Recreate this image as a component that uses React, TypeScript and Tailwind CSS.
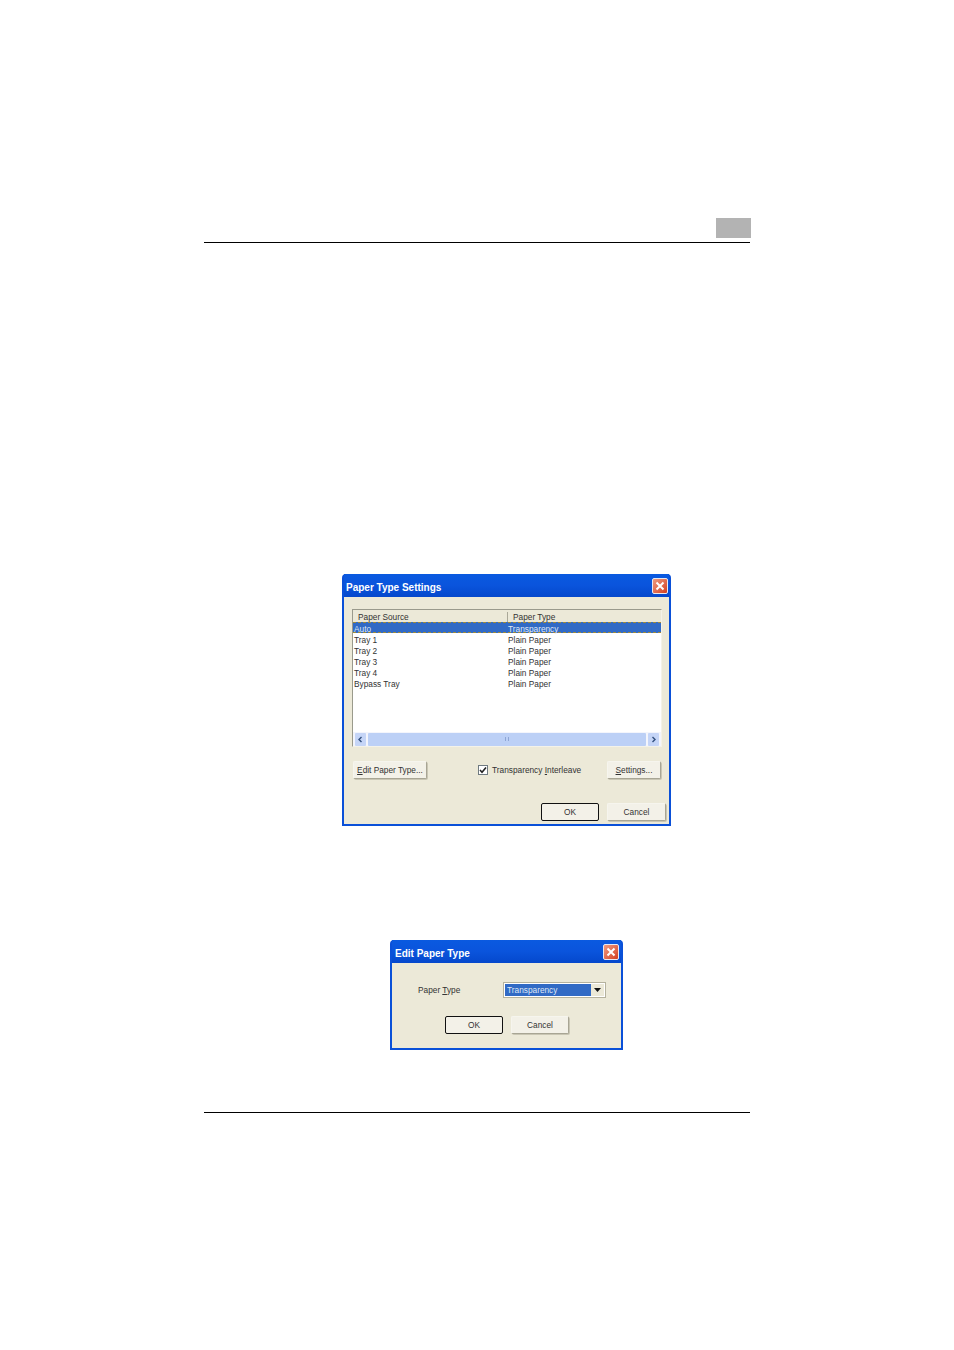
import { ReactNode } from "react";

const font = "font-['Liberation_Sans',Arial,sans-serif]";

const rows = [
  ["Tray 1", "Plain Paper"],
  ["Tray 2", "Plain Paper"],
  ["Tray 3", "Plain Paper"],
  ["Tray 4", "Plain Paper"],
  ["Bypass Tray", "Plain Paper"],
];

function CloseButton() {
  return (
    <div className="mt-[1px] flex h-[16px] w-[16px] items-center justify-center rounded-[2px] border border-[#e8e8f0] bg-gradient-to-br from-[#ee9a80] to-[#d33c1c]">
      <svg width="10" height="10" viewBox="0 0 10 10">
        <path d="M1.5 1.5 L8.5 8.5 M8.5 1.5 L1.5 8.5" stroke="#fff" strokeWidth="2" />
      </svg>
    </div>
  );
}

function TitleBar({ title, className }: { title: string; className: string }) {
  return (
    <div
      className={`flex h-[23px] items-center justify-between bg-gradient-to-b from-[#0a5ae0] via-[#0a54dc] to-[#0548cc] ${className}`}
    >
      <span className="pt-[3px] text-[10px] font-bold text-white">{title}</span>
      <CloseButton />
    </div>
  );
}

function Btn({
  children,
  className,
  primary,
}: {
  children: ReactNode;
  className: string;
  primary?: boolean;
}) {
  return (
    <div
      className={`flex h-[18px] items-center justify-center rounded-[2px] border bg-[#f3f1e8] text-[8.3px] text-[#333] ${
        primary
          ? "border-[#111]"
          : "border-[#f6f5ee] border-r-[#a8a594] border-b-[#a8a594] shadow-[1px_1px_0_#c9c6b4]"
      } ${className}`}
    >
      {children}
    </div>
  );
}

function ArrowBtn({ d }: { d: string }) {
  return (
    <div className="flex h-[13px] w-[11px] items-center justify-center rounded-[1px] bg-[#c5d5f7]">
      <svg width="7" height="7" viewBox="0 0 7 7">
        <path d={d} stroke="#33507f" strokeWidth="1.4" fill="none" />
      </svg>
    </div>
  );
}

function SettingsDialog() {
  return (
    <div className="ml-[138px] mt-[331px] h-[252px] w-[329px] rounded-t-[4px] border-2 border-t-0 border-[#0a50d8] bg-[#ece9d8]">
      <TitleBar title="Paper Type Settings" className="pl-[2px] pr-[1px]" />
      <div className="px-[8px] pt-[12px]">
        <div className="flex h-[138px] w-[310px] flex-col border border-[#9a9a8c] border-r-[#f4f2e8] border-b-[#f4f2e8] bg-white">
          <div className="flex h-[12px] shrink-0 items-end bg-[#ece9d8] text-[8.3px] leading-[10px] text-[#333]">
            <div className="w-[155px] border-r border-[#aaa898] pl-[5px]">Paper Source</div>
            <div className="pl-[5px]">Paper Type</div>
          </div>
          <div className="flex h-[11px] shrink-0 items-center border-y border-dashed border-[#a08a3a] bg-[#316ac5] pt-[4px] text-[8.3px] text-[#dfe6f5]">
            <div className="w-[155px] pl-px">Auto</div>
            <div>Transparency</div>
          </div>
          <div className="flex-1">
            {rows.map(([source, type]) => (
              <div key={source} className="flex h-[11px] items-center pt-[4px] text-[8.3px] text-[#333]">
                <div className="w-[155px] pl-px">{source}</div>
                <div>{type}</div>
              </div>
            ))}
          </div>
          <div className="flex h-[14px] shrink-0 items-center justify-between bg-[#f3f5fc] px-[2px]">
            <ArrowBtn d="M4.5 1 L2 3.5 L4.5 6" />
            <div className="mx-[2px] flex h-[13px] flex-1 items-center justify-center rounded-[1px] bg-[#bcd0f6]">
              <span className="h-[4px] w-[4px] border-x border-[#8ea6d6]" />
            </div>
            <ArrowBtn d="M2.5 1 L5 3.5 L2.5 6" />
          </div>
        </div>
        <div className="mt-[14px] flex w-[309px] items-center pl-px">
          <Btn className="w-[74px]">
            <span>
              <u>E</u>dit Paper Type...
            </span>
          </Btn>
          <div className="mb-[1px] ml-[51px] flex h-[10px] w-[10px] items-center justify-center border border-[#6f7a80] bg-white">
            <svg width="8" height="8" viewBox="0 0 8 8">
              <path d="M1 4 L3 6.2 L7 1.5" stroke="#222" strokeWidth="1.6" fill="none" />
            </svg>
          </div>
          <span className="ml-[4px] text-[8.3px] text-[#333]">
            Transparency <u>I</u>nterleave
          </span>
          <Btn className="ml-auto w-[54px]">
            <span>
              <u>S</u>ettings...
            </span>
          </Btn>
        </div>
        <div className="mr-[-5px] mt-[24px] flex justify-end gap-[8px]">
          <Btn primary className="w-[58px]">
            OK
          </Btn>
          <Btn className="w-[59px]">Cancel</Btn>
        </div>
      </div>
    </div>
  );
}

function EditDialog() {
  return (
    <div className="ml-[186px] mt-[114px] h-[110px] w-[233px] rounded-t-[4px] border-2 border-t-0 border-[#0a50d8] bg-[#ece9d8]">
      <TitleBar title="Edit Paper Type" className="pl-[3px] pr-[2px]" />
      <div className="flex items-center pl-[26px] pt-[19px]">
        <span className="w-[85px] text-[8.3px] text-[#333]">
          Paper <u>T</u>ype
        </span>
        <div className="flex h-[16px] w-[103px] items-center border border-[#b5b29e] bg-white p-px">
          <div className="flex h-full flex-1 items-center bg-[#316ac5] pl-[2px] text-[8.3px] text-[#dfe6f5]">
            Transparency
          </div>
          <div className="flex h-full w-[13px] items-center justify-center bg-[#ece9d8]">
            <svg width="7" height="4" viewBox="0 0 7 4">
              <path d="M0 0 H7 L3.5 4 Z" fill="#111" />
            </svg>
          </div>
        </div>
      </div>
      <div className="mt-[18px] flex gap-[8px] pl-[53px]">
        <Btn primary className="w-[58px]">
          OK
        </Btn>
        <Btn className="w-[58px]">Cancel</Btn>
      </div>
    </div>
  );
}

export default function App() {
  return (
    <div className={`h-[1350px] w-[954px] overflow-hidden bg-white pl-[204px] pt-[218px] ${font}`}>
      <div className="w-[546px]">
        <div className="flex justify-end">
          <div className="mr-[-1px] h-[20px] w-[35px] bg-[#b3b3b3]" />
        </div>
        <div className="mt-[4px] h-px bg-black" />
        <SettingsDialog />
        <EditDialog />
        <div className="mt-[62px] h-px bg-black" />
      </div>
    </div>
  );
}
